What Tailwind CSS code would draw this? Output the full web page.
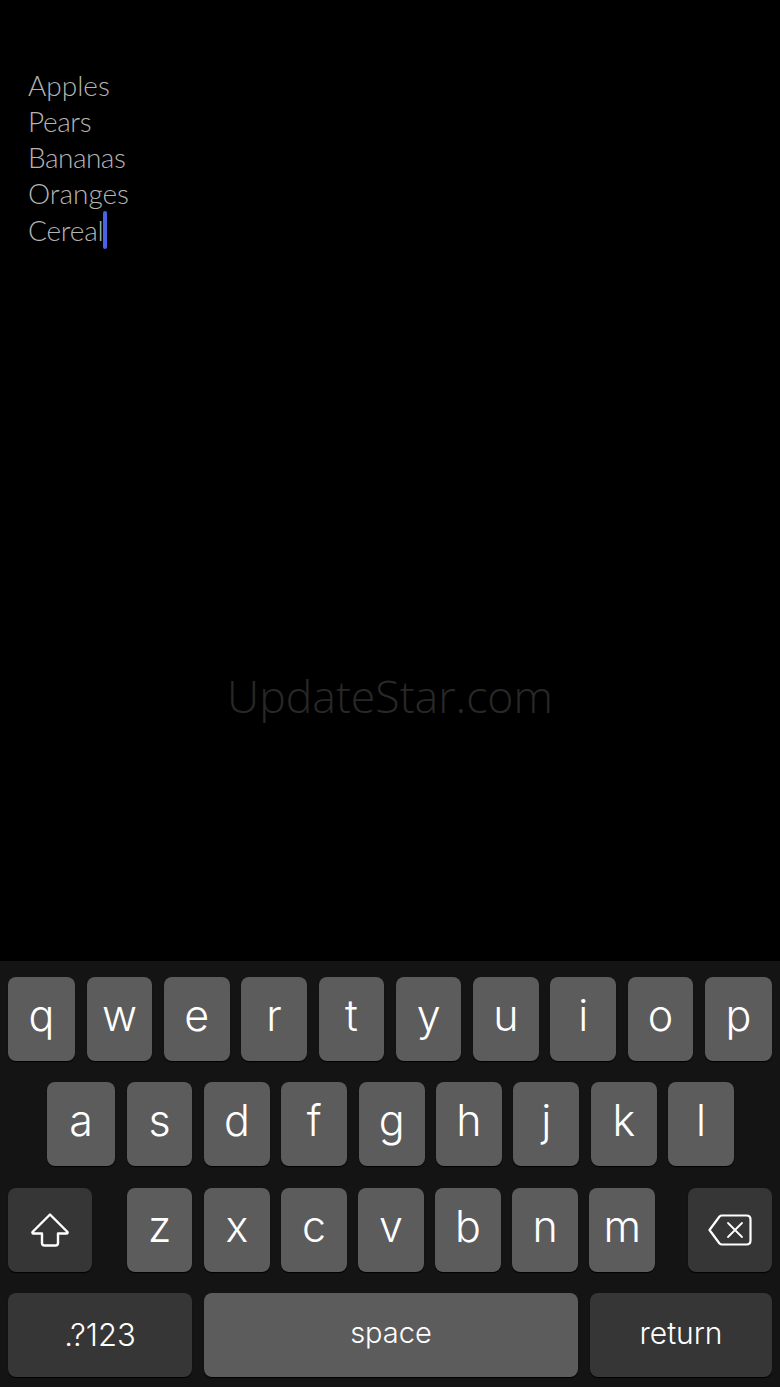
<!DOCTYPE html>
<html lang="en">
  <head>
    <meta charset="UTF-8" />
    <meta name="viewport" content="width=device-width, initial-scale=1.0" />
    <title>Notes</title>
    <script src="https://cdn.jsdelivr.net/npm/@tailwindcss/browser@4"></script>
  </head>
  <body class="bg-black">
    <div class="flex flex-col h-[1387px] w-[780px] overflow-hidden">
      <!-- text area -->
      <main class="relative flex-1 bg-black">
        <ul class="pt-[67px] pl-[28px] font-['Lato',sans-serif] font-light text-[28px] leading-[36px] text-[#b4b4b4]">
          <li>Apples</li>
          <li class="tracking-[-0.4px]">Pears</li>
          <li class="tracking-[-0.5px]">Bananas</li>
          <li>Oranges</li>
          <li class="flex items-center tracking-[-0.2px] -mt-px">Cereal<span class="w-[3.5px] h-[38px] -ml-[0.5px] mt-px rounded-sm bg-[#4a62e6]"></span></li>
        </ul>
        <!-- watermark -->
        <div class="absolute left-0 right-0 top-[667px] text-center font-['Open_Sans',sans-serif] font-light text-[44.6px] leading-[58px] text-[#282828]">UpdateStar.com</div>
      </main>

      <!-- keyboard -->
      <section class="h-[426px] bg-[#141414] pt-[16px] px-[8px] flex flex-col gap-[21.4px] font-['Inter',sans-serif] text-white">
        <div class="flex gap-[11.7px]">
          <div class="w-[67px] h-[84px] rounded-[8px] bg-[#5c5c5c] shadow-[0_1px_1px_#000] flex items-center justify-center text-[43px] font-light pb-[8px]">q</div>
          <div class="flex-1 h-[84px] rounded-[8px] bg-[#5c5c5c] shadow-[0_1px_1px_#000] flex items-center justify-center text-[43px] font-light pb-[8px]">w</div>
          <div class="flex-1 h-[84px] rounded-[8px] bg-[#5c5c5c] shadow-[0_1px_1px_#000] flex items-center justify-center text-[43px] font-light pb-[8px]">e</div>
          <div class="flex-1 h-[84px] rounded-[8px] bg-[#5c5c5c] shadow-[0_1px_1px_#000] flex items-center justify-center text-[43px] font-light pb-[8px]">r</div>
          <div class="flex-1 h-[84px] rounded-[8px] bg-[#5c5c5c] shadow-[0_1px_1px_#000] flex items-center justify-center text-[43px] font-light pb-[8px]">t</div>
          <div class="flex-1 h-[84px] rounded-[8px] bg-[#5c5c5c] shadow-[0_1px_1px_#000] flex items-center justify-center text-[43px] font-light pb-[8px]">y</div>
          <div class="flex-1 h-[84px] rounded-[8px] bg-[#5c5c5c] shadow-[0_1px_1px_#000] flex items-center justify-center text-[43px] font-light pb-[8px]">u</div>
          <div class="flex-1 h-[84px] rounded-[8px] bg-[#5c5c5c] shadow-[0_1px_1px_#000] flex items-center justify-center text-[43px] font-light pb-[8px]">i</div>
          <div class="flex-1 h-[84px] rounded-[8px] bg-[#5c5c5c] shadow-[0_1px_1px_#000] flex items-center justify-center text-[43px] font-light pb-[8px]">o</div>
          <div class="w-[67px] h-[84px] rounded-[8px] bg-[#5c5c5c] shadow-[0_1px_1px_#000] flex items-center justify-center text-[43px] font-light pb-[8px]">p</div>
        </div>
        <div class="flex gap-[11.6px] pl-[39px] pr-[38px]">
          <div class="w-[68px] h-[84px] rounded-[8px] bg-[#5c5c5c] shadow-[0_1px_1px_#000] flex items-center justify-center text-[43px] font-light pb-[8px]">a</div>
          <div class="flex-1 h-[84px] rounded-[8px] bg-[#5c5c5c] shadow-[0_1px_1px_#000] flex items-center justify-center text-[43px] font-light pb-[8px]">s</div>
          <div class="flex-1 h-[84px] rounded-[8px] bg-[#5c5c5c] shadow-[0_1px_1px_#000] flex items-center justify-center text-[43px] font-light pb-[8px]">d</div>
          <div class="flex-1 h-[84px] rounded-[8px] bg-[#5c5c5c] shadow-[0_1px_1px_#000] flex items-center justify-center text-[43px] font-light pb-[8px]">f</div>
          <div class="flex-1 h-[84px] rounded-[8px] bg-[#5c5c5c] shadow-[0_1px_1px_#000] flex items-center justify-center text-[43px] font-light pb-[8px]">g</div>
          <div class="flex-1 h-[84px] rounded-[8px] bg-[#5c5c5c] shadow-[0_1px_1px_#000] flex items-center justify-center text-[43px] font-light pb-[8px]">h</div>
          <div class="flex-1 h-[84px] rounded-[8px] bg-[#5c5c5c] shadow-[0_1px_1px_#000] flex items-center justify-center text-[43px] font-light pb-[8px]">j</div>
          <div class="flex-1 h-[84px] rounded-[8px] bg-[#5c5c5c] shadow-[0_1px_1px_#000] flex items-center justify-center text-[43px] font-light pb-[8px]">k</div>
          <div class="flex-1 h-[84px] rounded-[8px] bg-[#5c5c5c] shadow-[0_1px_1px_#000] flex items-center justify-center text-[43px] font-light pb-[8px]">l</div>
        </div>
        <div class="flex">
          <div class="w-[84px] h-[84px] rounded-[8px] bg-[#363636] shadow-[0_1px_1px_#000] flex items-center justify-center">
            <svg class="w-[40px] h-[36px]" viewBox="0 0 40 36" fill="none" stroke="white" stroke-width="2.4" stroke-linejoin="round">
              <path d="M20 2.5 L37.5 20 Q38 21.5 36.5 21.5 H28 V31 Q28 33.5 25.5 33.5 H14.5 Q12 33.5 12 31 V21.5 H3.5 Q2 21.5 2.5 20 Z" />
            </svg>
          </div>
          <div class="w-[528px] ml-[35px] flex gap-[11.6px]">
            <div class="flex-1 h-[84px] rounded-[8px] bg-[#5c5c5c] shadow-[0_1px_1px_#000] flex items-center justify-center text-[43px] font-light pb-[8px]">z</div>
            <div class="flex-1 h-[84px] rounded-[8px] bg-[#5c5c5c] shadow-[0_1px_1px_#000] flex items-center justify-center text-[43px] font-light pb-[8px]">x</div>
            <div class="flex-1 h-[84px] rounded-[8px] bg-[#5c5c5c] shadow-[0_1px_1px_#000] flex items-center justify-center text-[43px] font-light pb-[8px]">c</div>
            <div class="flex-1 h-[84px] rounded-[8px] bg-[#5c5c5c] shadow-[0_1px_1px_#000] flex items-center justify-center text-[43px] font-light pb-[8px]">v</div>
            <div class="flex-1 h-[84px] rounded-[8px] bg-[#5c5c5c] shadow-[0_1px_1px_#000] flex items-center justify-center text-[43px] font-light pb-[8px]">b</div>
            <div class="flex-1 h-[84px] rounded-[8px] bg-[#5c5c5c] shadow-[0_1px_1px_#000] flex items-center justify-center text-[43px] font-light pb-[8px]">n</div>
            <div class="flex-1 h-[84px] rounded-[8px] bg-[#5c5c5c] shadow-[0_1px_1px_#000] flex items-center justify-center text-[43px] font-light pb-[8px]">m</div>
          </div>
          <div class="w-[84px] h-[84px] ml-auto rounded-[8px] bg-[#363636] shadow-[0_1px_1px_#000] flex items-center justify-center">
            <svg class="w-[44px] h-[32px]" viewBox="0 0 44 32" fill="none" stroke="white" stroke-width="2.2" stroke-linejoin="round" stroke-linecap="round">
              <path d="M14 1.5 H38.5 Q42.5 1.5 42.5 5.5 V26.5 Q42.5 30.5 38.5 30.5 H14 Q12.5 30.5 11.5 29.5 L1.5 16 L11.5 2.5 Q12.5 1.5 14 1.5 Z" />
              <path d="M20 9 L34 23 M34 9 L20 23" stroke-width="1.8" />
            </svg>
          </div>
        </div>
        <div class="flex gap-[11.6px]">
          <div class="w-[184px] h-[84px] rounded-[8px] bg-[#363636] shadow-[0_1px_1px_#000] flex items-center justify-center text-[31px] font-light">.?123</div>
          <div class="flex-1 h-[84px] rounded-[8px] bg-[#5c5c5c] shadow-[0_1px_1px_#000] flex items-center justify-center text-[29px] font-light pb-[4px]">space</div>
          <div class="w-[182px] h-[84px] rounded-[8px] bg-[#363636] shadow-[0_1px_1px_#000] flex items-center justify-center text-[30px] font-light pb-[4px]">return</div>
        </div>
      </section>
    </div>
  </body>
</html>
